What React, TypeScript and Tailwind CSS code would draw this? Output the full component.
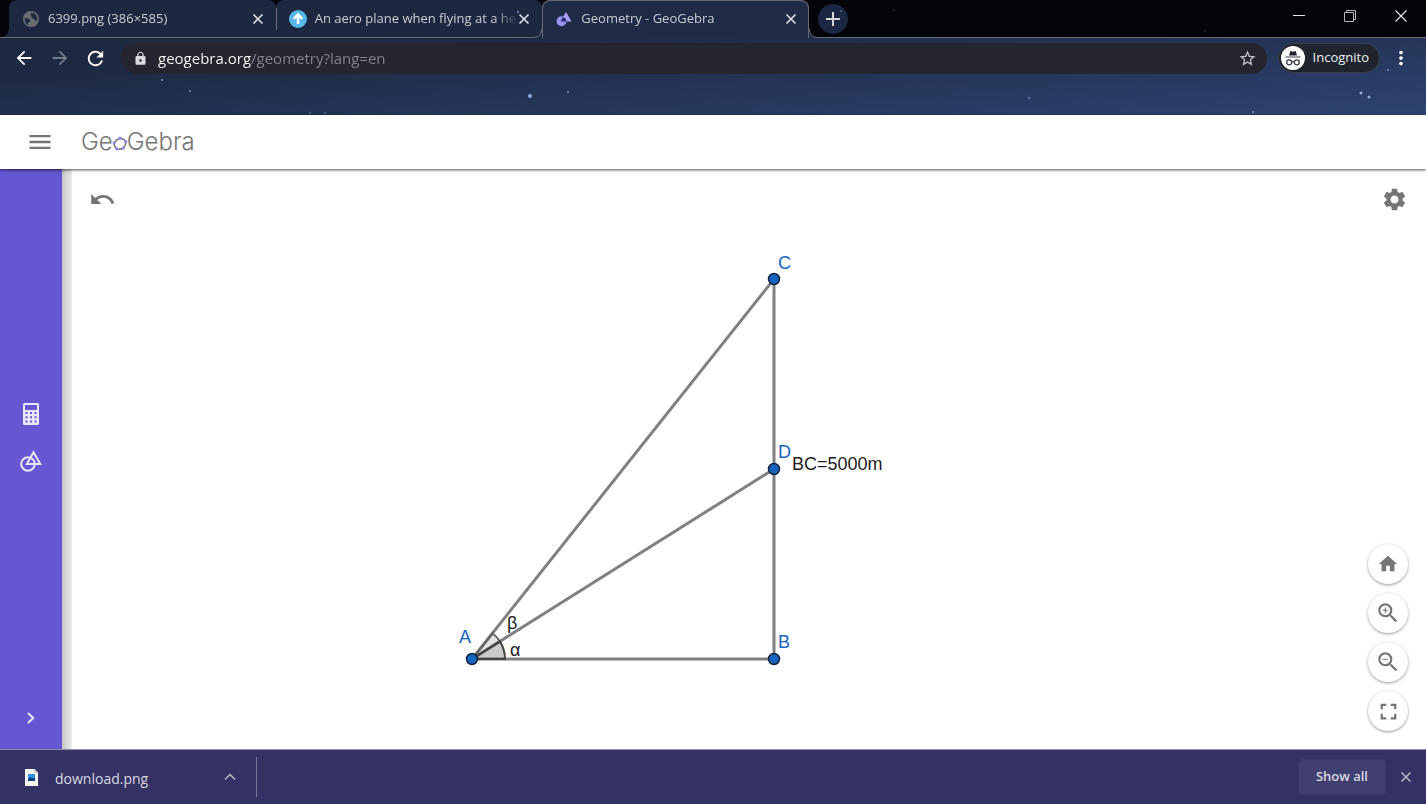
// App.tsx
import { useState } from "react";
import type { ReactNode } from "react";
import { MdArrowBack, MdArrowForward, MdFullscreen, MdHome, MdLock, MdMenu, MdMoreVert, MdRefresh, MdSettings, MdStarBorder, MdUndo, MdZoomIn, MdZoomOut } from "react-icons/md";

const TABS = [
  { id: "image", title: "6399.png (386×585)", icon: <GlobeIcon /> },
  { id: "question", title: "An aero plane when flying at a he", icon: <ArrowBadge /> },
  { id: "geogebra", title: "Geometry - GeoGebra", icon: <GeometryFavicon /> },
];

// x, y, radius, opacity
const STARS = [
  [162, 80, 1, 0.7], [190, 91, 1, 0.7], [310, 113, 1, 0.4], [325, 113, 1, 0.4],
  [518, 12, 1, 0.8], [530, 96, 2, 0.9], [568, 92, 1, 0.7], [670, 3, 1, 0.4],
  [757, 22, 1, 0.4], [841, 11, 1, 0.4], [894, 10, 1, 0.2], [1029, 98, 1, 0.6],
  [1205, 31, 1, 0.2], [1253, 112, 1, 0.8], [1361, 93, 1.5, 0.9], [1369, 97, 1.5, 0.9], [1388, 70, 1, 0.7],
];

function GlobeIcon() {
  return (
    <svg viewBox="0 0 16 16" className="size-4 shrink-0">
      <circle cx="8" cy="8" r="8" fill="#6b6d72" />
      <path d="M1.600 6.800 5 7.600l2.200 1-.2 2-1.700 1.200-.4 2.400C3 13.200 1.500 10.500 1.600 6.800zM8.500 1.800 7 3.800l1.600 1L8 6.800l3 1.200 1.500 2 1.800-1C14.800 5 12 1.800 8.500 1.800z" fill="#202a40" />
    </svg>
  );
}

function ArrowBadge() {
  return (
    <svg viewBox="0 0 18 18" className="-mx-px size-[18px] shrink-0">
      <circle cx="9" cy="9" r="9" fill="#56b7e8" />
      <path d="M9 14V5M4.800 8.800 9 4.600l4.200 4.200" fill="none" stroke="#fff" strokeWidth="2.600" />
    </svg>
  );
}

function GeometryFavicon() {
  return (
    <svg viewBox="0 0 16 16" className="size-4 shrink-0">
      <path d="M10 1 15.500 10.500H4.500z" fill="#a9a2f5" />
      <circle cx="5.500" cy="10.300" r="5" fill="#9a92f2" />
      <path d="M7 6 10 8l.4 2.500H4.500z" fill="#2c2f7a" />
    </svg>
  );
}

function CloseIcon({ className }: { className?: string }) {
  return (
    <svg viewBox="0 0 12 12" className={className}>
      <path d="m1.500 1.500 9 9M10.500 1.500l-9 9" fill="none" stroke="currentColor" strokeWidth="1.600" />
    </svg>
  );
}

function IncognitoIcon() {
  return (
    <svg viewBox="0 0 24 24" className="size-6">
      <circle cx="12" cy="12" r="12" fill="#fff" />
      <path d="M8 9.500 9.300 5l2.700.7 2.700-.7L16 9.500z" fill="#202430" />
      <path d="M4.500 11h15M10.800 16c.8-.6 1.600-.6 2.400 0" fill="none" stroke="#3a3e48" strokeWidth="1.200" />
      <circle cx="8.200" cy="16.300" r="2.500" fill="none" stroke="#3a3e48" strokeWidth="1.300" />
      <circle cx="15.800" cy="16.300" r="2.500" fill="none" stroke="#3a3e48" strokeWidth="1.300" />
    </svg>
  );
}

function PentagonO() {
  return (
    <svg viewBox="0 0 16 15" className="-mx-px mt-0.5 h-[15px] w-4">
      <path d="M8 2.200Q13 3 13.800 5.800 14 9.500 11.500 12 8 13.800 4.800 12.800 1.800 10 2.200 6.800 4 3.500 8 2.200z" fill="none" stroke="#757575" strokeWidth="1.500" />
      {[[8, 2.2], [13.8, 5.8], [11.5, 12], [4.8, 12.8], [2.2, 6.8]].map(([x, y]) => (
        <circle key={x} cx={x} cy={y} r="1.600" fill="#8b86ea" />
      ))}
    </svg>
  );
}

function CalculatorIcon() {
  return (
    <svg viewBox="0 0 16 22" className="h-[22px] w-4">
      <path fillRule="evenodd" fill="currentColor" d="M1.500 0h13A1.500 1.500 0 0 1 16 1.500v19a1.500 1.500 0 0 1-1.500 1.500h-13A1.500 1.500 0 0 1 0 20.500v-19A1.500 1.500 0 0 1 1.500 0zM2 2v5h12V2zM2.500 9v2h2V9zM7 9v2h2V9zM11.500 9v2h2V9zM2.500 13.300v2h2v-2zM7 13.300v2h2v-2zM11.500 13.300v2h2v-2zM2.500 17.500v2h2v-2zM7 17.500v2h2v-2zM11.500 17.500v2h2v-2z" />
    </svg>
  );
}

function ToolsIcon() {
  return (
    <svg viewBox="0 0 22 22" className="size-[22px]" fill="none" stroke="currentColor" strokeWidth="2">
      <circle cx="8" cy="14" r="6.800" />
      <path d="M13.500 2.200 20.300 14H6.800z" />
    </svg>
  );
}

// curved feet that join the active tab to the toolbar line
function TabFeet() {
  return (
    <>
      <svg viewBox="0 0 9 9" className="absolute bottom-0 -left-[9px] size-[9px]">
        <path d="M0 8.500h1Q8.500 8 8.500 0H9v9H0z" fill="#1f2b46" />
        <path d="M0 8.500h1Q8.500 8 8.500 0" fill="none" stroke="#6a6d74" />
      </svg>
      <svg viewBox="0 0 9 9" className="absolute -right-[9px] bottom-0 size-[9px]">
        <path d="M9 8.500H8Q.5 8 .5 0H0v9h9z" fill="#1f2b46" />
        <path d="M9 8.500H8Q.5 8 .5 0" fill="none" stroke="#6a6d74" />
      </svg>
    </>
  );
}

function Tab({ title, icon, active, onSelect }: { title: string; icon: ReactNode; active: boolean; onSelect: () => void }) {
  return (
    <div className={`relative flex min-w-0 flex-1 items-center rounded-t-lg pr-3 pl-3.5 ${active ? "z-1 -mb-px border-t border-[#6a6d74] bg-[#1f2b46] pb-px shadow-[inset_1px_0_#6a6d74,inset_-1px_0_#6a6d74]" : "bg-[#1d2840]"}`}>
      {active && <TabFeet />}
      <button onClick={onSelect} className="flex min-w-0 flex-1 items-center gap-[9px] text-left">
        {icon}
        <span className="flex-1 pb-0.5 text-[13px] leading-5 whitespace-nowrap text-[#c9ccd2] [mask-image:linear-gradient(to_right,#000_88%,transparent)]">{title}</span>
      </button>
      <button aria-label={`Close ${title}`} className="text-[#dfe1e5]">
        <CloseIcon className="size-3" />
      </button>
    </div>
  );
}

function TabStrip() {
  const [active, setActive] = useState("geogebra");
  return (
    <div className="flex h-[38px] border-b border-[#6a6d74] bg-[#02040a]">
      <div className="flex w-[809px] min-w-0">
        <div className="w-[9px] shrink-0 bg-[#1d2840]">
          <div className="h-full rounded-br-lg bg-[#02040a]" />
        </div>
        {TABS.map((t, i) => (
          <div key={t.id} className="relative flex min-w-0 flex-1">
            {i === 1 && <div className="absolute top-2 left-0 z-1 h-[22px] w-px bg-[#6a6d74]" />}
            <Tab title={t.title} icon={t.icon} active={active === t.id} onSelect={() => setActive(t.id)} />
          </div>
        ))}
      </div>
      <button aria-label="New tab" className="mt-1 ml-[9px] flex size-[30px] shrink-0 items-center justify-center rounded-full bg-[#1b2742] text-[#d5d7db]">
        <svg viewBox="0 0 14 14" className="size-3.5">
          <path d="M7 0v14M0 7h14" stroke="currentColor" strokeWidth="2" />
        </svg>
      </button>
      <div className="ml-auto flex h-8 shrink-0 text-[#e4e4e6]">
        <button aria-label="Minimize" className="flex w-[51px] items-center justify-center">
          <svg viewBox="0 0 12 12" className="size-3"><path d="M0 5.500h12" stroke="currentColor" /></svg>
        </button>
        <button aria-label="Restore" className="flex w-[51px] items-center justify-center">
          <svg viewBox="0 0 12 12" className="size-3" fill="none" stroke="#b5b5b8">
            <path d="M.5 2.500h9v9h-9zM2.500 2.500v-2h9v9h-2" />
          </svg>
        </button>
        <button aria-label="Close window" className="flex w-[51px] items-center justify-center">
          <svg viewBox="0 0 12 12" className="size-3"><path d="m.5.5 11 11M11.500.5l-11 11" stroke="currentColor" strokeWidth="1.200" /></svg>
        </button>
      </div>
    </div>
  );
}

function Toolbar() {
  return (
    <div className="flex h-10 items-center pr-3.5 pl-[13px] text-white">
      <button aria-label="Back"><MdArrowBack className="size-[22px]" /></button>
      <button aria-label="Forward" className="ml-3.5 text-[#757b8b]"><MdArrowForward className="size-[22px]" /></button>
      <button aria-label="Reload" className="ml-[13px]"><MdRefresh className="size-[23px]" /></button>
      <div className="ml-3.5 flex h-[31px] min-w-0 flex-1 items-center rounded-full bg-[#25252f] pr-2.5 pl-3">
        <MdLock className="size-[15px] text-[#dcdce0]" />
        <input
          aria-label="Address"
          type="text"
          defaultValue="geogebra.org/geometry?lang=en"
          className="ml-2.5 min-w-0 flex-1 bg-linear-to-r from-white from-[93px] to-[#85868d] to-[93px] bg-clip-text text-[15px] leading-6 text-transparent outline-none"
        />
        <button aria-label="Bookmark this page" className="text-[#c4c5ca]"><MdStarBorder className="size-[19px]" /></button>
      </div>
      <button className="ml-[11px] flex h-[30px] items-center gap-2 rounded-full border border-[#39404a] bg-[#1f242e] pr-2.5 pl-0.5 text-[13px] text-[#f0f0f2]">
        <IncognitoIcon />
        Incognito
      </button>
      <button aria-label="Menu" className="ml-2.5"><MdMoreVert className="size-[22px]" /></button>
    </div>
  );
}

function BrowserChrome() {
  return (
    <div className="relative h-[115px] shrink-0 bg-linear-to-br from-[#1d2841] from-30% to-[#2d4371]">
      <TabStrip />
      <Toolbar />
      <svg className="pointer-events-none absolute inset-0 h-full w-full">
        {STARS.map(([x, y, r, o]) => (
          <circle key={x} cx={x} cy={y} r={r} opacity={o} fill="#9db8e8" />
        ))}
      </svg>
    </div>
  );
}

function AppHeader() {
  return (
    <header className="relative z-10 flex h-[54px] shrink-0 items-center bg-white pl-[26px] text-[#757575] shadow-[0_1px_3px_rgba(0,0,0,0.7)]">
      <button aria-label="Open menu"><MdMenu className="size-7" /></button>
      <a href="#" aria-label="GeoGebra" className="ml-[27px] flex items-center font-['Inter'] text-2xl leading-7 font-light">
        Ge<PentagonO />Gebra
      </a>
    </header>
  );
}

function Sidebar() {
  return (
    <nav className="relative z-1 flex w-[62px] shrink-0 flex-col items-center bg-[#6557d2] text-[#e8e6fa]">
      <div className="flex flex-1 flex-col items-center justify-center gap-[25px] pt-[46px] pb-[90px]">
        <button aria-label="Algebra"><CalculatorIcon /></button>
        <button aria-label="Tools"><ToolsIcon /></button>
      </div>
      <button aria-label="Expand" className="absolute bottom-[25px]">
        <svg viewBox="0 0 8 12" className="h-3 w-2"><path d="m1 1 5.200 5L1 11" fill="none" stroke="currentColor" strokeWidth="2" /></svg>
      </button>
      <div className="absolute inset-y-0 left-full w-2.5 bg-linear-to-r from-[#c4c4c4] to-[#ececec]" />
    </nav>
  );
}

const POINTS = [
  { name: "A", x: 410, y: 490, lx: 397, ly: 474 },
  { name: "B", x: 712, y: 490, lx: 716, ly: 479 },
  { name: "C", x: 712, y: 110, lx: 716, ly: 100 },
  { name: "D", x: 712, y: 300, lx: 716, ly: 289 },
];

function Construction() {
  return (
    <svg className="absolute inset-0 h-full w-full font-['Liberation_Sans'] text-[18px]">
      <g stroke="#808080" strokeWidth="3">
        <path d="M410 490H712V110z" fill="none" />
        <path d="M410 490 712 300" />
      </g>
      {/* angles DAC and BAD */}
      <path d="M410 490 430.500 464.200A33 33 0 0 1 437.900 472.400z" fill="#000" fillOpacity=".1" stroke="#666" strokeWidth="2" />
      <path d="M410 490H443A33 33 0 0 0 437.900 472.400z" fill="#000" fillOpacity=".2" stroke="#444" strokeWidth="2" />
      {POINTS.map((p) => (
        <g key={p.name}>
          <circle cx={p.x} cy={p.y} r="5.500" fill="#1565c0" stroke="#14243a" strokeWidth="1.500" />
          <text x={p.lx} y={p.ly} fill="#1565c0">{p.name}</text>
        </g>
      ))}
      <text x="445" y="460" fill="#222">β</text>
      <text x="448" y="487" fill="#222">α</text>
      <text x="730" y="301" fill="#222">BC=5000m</text>
    </svg>
  );
}

function ViewButton({ label, children }: { label: string; children: ReactNode }) {
  return (
    <button aria-label={label} className="flex size-10 items-center justify-center rounded-full bg-white shadow-[0_1px_3px_rgba(0,0,0,0.4)]">
      {children}
    </button>
  );
}

function Canvas() {
  return (
    <main className="relative min-w-0 flex-1 bg-white text-[#757575]">
      <Construction />
      <div className="relative flex justify-between pt-[17px] pr-[18px] pl-[27px]">
        <button aria-label="Undo"><MdUndo className="size-[27px]" /></button>
        <button aria-label="Settings"><MdSettings className="size-[27px]" /></button>
      </div>
      <div className="absolute right-[18px] bottom-[18px] flex flex-col gap-[9px]">
        <ViewButton label="Standard view"><MdHome className="size-[22px]" /></ViewButton>
        <ViewButton label="Zoom in"><MdZoomIn className="size-[26px]" /></ViewButton>
        <ViewButton label="Zoom out"><MdZoomOut className="size-[26px]" /></ViewButton>
        <ViewButton label="Fullscreen"><MdFullscreen className="size-[27px]" /></ViewButton>
      </div>
    </main>
  );
}

function DownloadBar() {
  return (
    <footer className="flex h-[55px] shrink-0 items-center border-t border-[#8f8ea6] bg-[#343264] pr-3.5 text-[#d8d8e2]">
      <button className="flex items-center pl-[25px] text-sm">
        <svg viewBox="0 0 13 17" className="mr-[17px] h-[17px] w-[13px]">
          <path d="M0 0h9.500L13 3.500V17H0z" fill="#f7f7f5" />
          <path d="M9.500 0v3.500H13z" fill="#b9b7b0" />
          <path d="M3 5h7v7H3z" fill="#2f8fe0" />
          <path d="m3 10 2.500-1.500L8 9.500l2-1V12H3z" fill="#0d3f80" />
        </svg>
        <span className="pt-1">download.png</span>
      </button>
      <button aria-label="Download options" className="ml-[76px]">
        <svg viewBox="0 0 12 8" className="h-2 w-3"><path d="m1 6.500 5-5 5 5" fill="none" stroke="#b9b9c8" strokeWidth="1.500" /></svg>
      </button>
      <div className="ml-5 h-10 w-px bg-[#77769a]" />
      <button className="ml-auto h-9 rounded-sm border border-[#3b3968] bg-[#413f6f] px-[17px] text-[13px] font-semibold">Show all</button>
      <button aria-label="Close downloads" className="ml-3.5 text-[#b5b4c4]"><CloseIcon className="size-3" /></button>
    </footer>
  );
}

export default function App() {
  return (
    <div className="flex h-screen flex-col overflow-hidden bg-white font-['Open_Sans',sans-serif]">
      <BrowserChrome />
      <AppHeader />
      <div className="flex min-h-0 flex-1">
        <Sidebar />
        <Canvas />
      </div>
      <DownloadBar />
    </div>
  );
}
